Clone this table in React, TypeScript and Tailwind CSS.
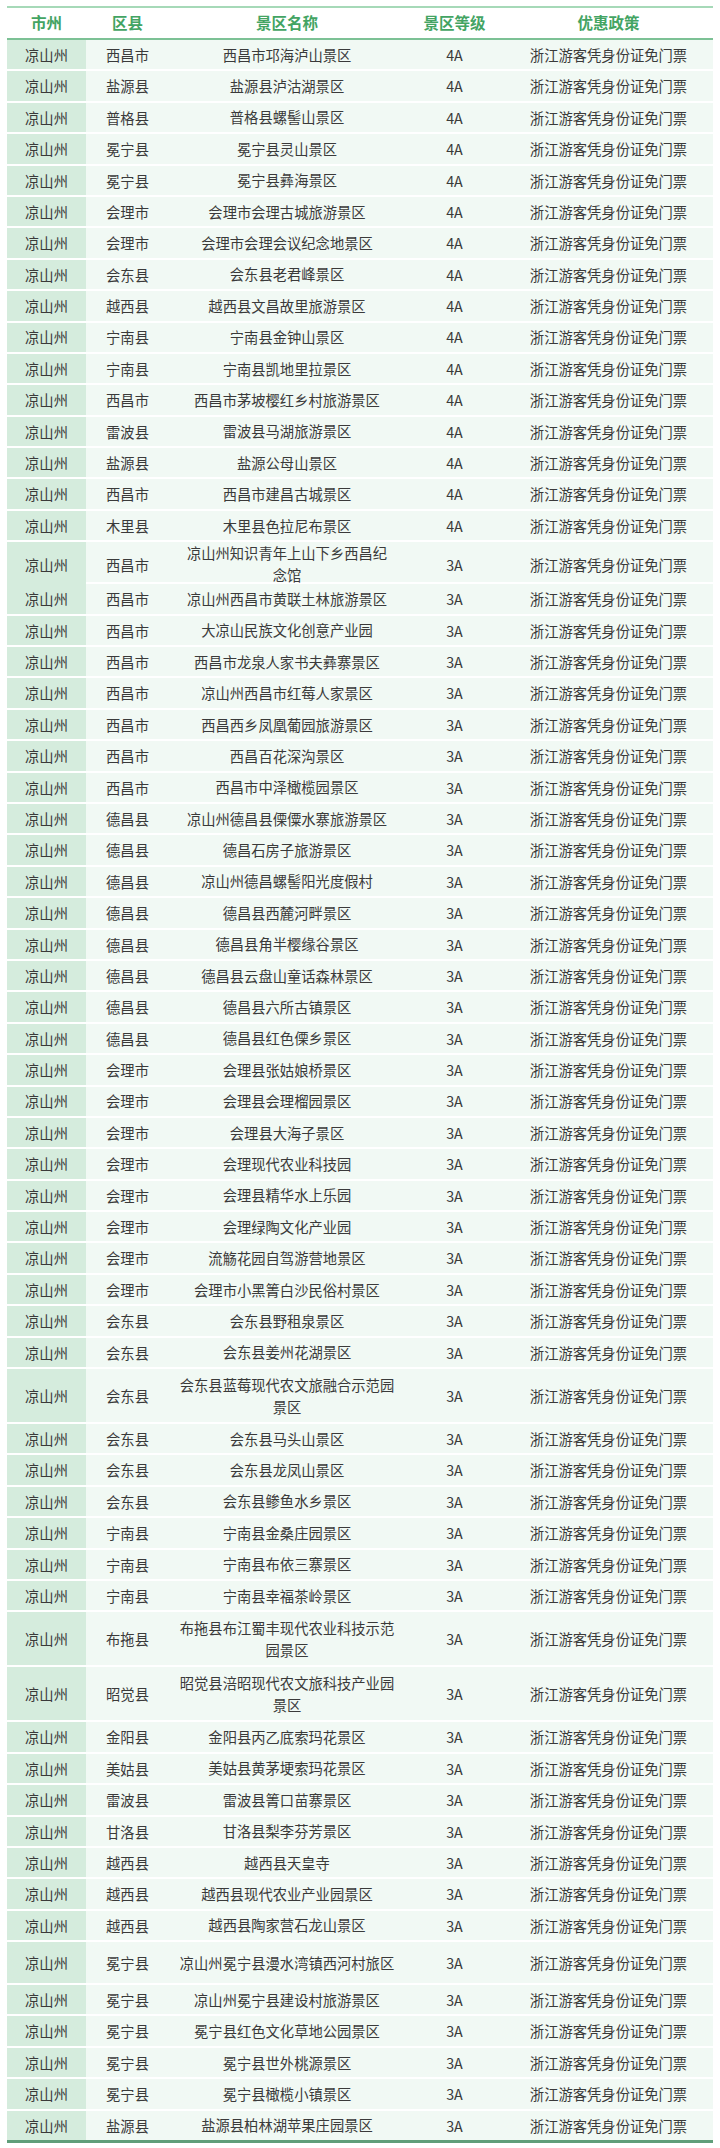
type Spot = {
  county: string;
  name: string;
  level: string;
  h?: string;
};

// names with "|" are broken onto two lines, as in the source sheet
const spots: Spot[] = [
  { county: '西昌市', name: '西昌市邛海泸山景区', level: '4A' },
  { county: '盐源县', name: '盐源县泸沽湖景区', level: '4A' },
  { county: '普格县', name: '普格县螺髻山景区', level: '4A' },
  { county: '冕宁县', name: '冕宁县灵山景区', level: '4A' },
  { county: '冕宁县', name: '冕宁县彝海景区', level: '4A' },
  { county: '会理市', name: '会理市会理古城旅游景区', level: '4A' },
  { county: '会理市', name: '会理市会理会议纪念地景区', level: '4A' },
  { county: '会东县', name: '会东县老君峰景区', level: '4A' },
  { county: '越西县', name: '越西县文昌故里旅游景区', level: '4A' },
  { county: '宁南县', name: '宁南县金钟山景区', level: '4A' },
  { county: '宁南县', name: '宁南县凯地里拉景区', level: '4A' },
  { county: '西昌市', name: '西昌市茅坡樱红乡村旅游景区', level: '4A' },
  { county: '雷波县', name: '雷波县马湖旅游景区', level: '4A' },
  { county: '盐源县', name: '盐源公母山景区', level: '4A' },
  { county: '西昌市', name: '西昌市建昌古城景区', level: '4A' },
  { county: '木里县', name: '木里县色拉尼布景区', level: '4A' },
  { county: '西昌市', name: '凉山州知识青年上山下乡西昌纪|念馆', level: '3A', h: 'h-[40px]' },
  { county: '西昌市', name: '凉山州西昌市黄联土林旅游景区', level: '3A' },
  { county: '西昌市', name: '大凉山民族文化创意产业园', level: '3A' },
  { county: '西昌市', name: '西昌市龙泉人家书夫彝寨景区', level: '3A' },
  { county: '西昌市', name: '凉山州西昌市红莓人家景区', level: '3A' },
  { county: '西昌市', name: '西昌西乡凤凰葡园旅游景区', level: '3A' },
  { county: '西昌市', name: '西昌百花深沟景区', level: '3A' },
  { county: '西昌市', name: '西昌市中泽橄榄园景区', level: '3A' },
  { county: '德昌县', name: '凉山州德昌县傈僳水寨旅游景区', level: '3A' },
  { county: '德昌县', name: '德昌石房子旅游景区', level: '3A' },
  { county: '德昌县', name: '凉山州德昌螺髻阳光度假村', level: '3A' },
  { county: '德昌县', name: '德昌县西麓河畔景区', level: '3A' },
  { county: '德昌县', name: '德昌县角半樱缘谷景区', level: '3A' },
  { county: '德昌县', name: '德昌县云盘山童话森林景区', level: '3A' },
  { county: '德昌县', name: '德昌县六所古镇景区', level: '3A' },
  { county: '德昌县', name: '德昌县红色傈乡景区', level: '3A' },
  { county: '会理市', name: '会理县张姑娘桥景区', level: '3A' },
  { county: '会理市', name: '会理县会理榴园景区', level: '3A' },
  { county: '会理市', name: '会理县大海子景区', level: '3A' },
  { county: '会理市', name: '会理现代农业科技园', level: '3A' },
  { county: '会理市', name: '会理县精华水上乐园', level: '3A' },
  { county: '会理市', name: '会理绿陶文化产业园', level: '3A' },
  { county: '会理市', name: '流觞花园自驾游营地景区', level: '3A' },
  { county: '会理市', name: '会理市小黑箐白沙民俗村景区', level: '3A' },
  { county: '会东县', name: '会东县野租泉景区', level: '3A' },
  { county: '会东县', name: '会东县姜州花湖景区', level: '3A' },
  { county: '会东县', name: '会东县蓝莓现代农文旅融合示范园|景区', level: '3A', h: 'h-[53px]' },
  { county: '会东县', name: '会东县马头山景区', level: '3A' },
  { county: '会东县', name: '会东县龙凤山景区', level: '3A' },
  { county: '会东县', name: '会东县鲹鱼水乡景区', level: '3A' },
  { county: '宁南县', name: '宁南县金桑庄园景区', level: '3A' },
  { county: '宁南县', name: '宁南县布依三寨景区', level: '3A' },
  { county: '宁南县', name: '宁南县幸福茶岭景区', level: '3A' },
  { county: '布拖县', name: '布拖县布江蜀丰现代农业科技示范|园景区', level: '3A', h: 'h-[53px]' },
  { county: '昭觉县', name: '昭觉县涪昭现代农文旅科技产业园|景区', level: '3A', h: 'h-[53px]' },
  { county: '金阳县', name: '金阳县丙乙底索玛花景区', level: '3A' },
  { county: '美姑县', name: '美姑县黄茅埂索玛花景区', level: '3A' },
  { county: '雷波县', name: '雷波县箐口苗寨景区', level: '3A' },
  { county: '甘洛县', name: '甘洛县梨李芬芳景区', level: '3A' },
  { county: '越西县', name: '越西县天皇寺', level: '3A' },
  { county: '越西县', name: '越西县现代农业产业园景区', level: '3A' },
  { county: '越西县', name: '越西县陶家营石龙山景区', level: '3A' },
  { county: '冕宁县', name: '凉山州冕宁县漫水湾镇西河村旅区', level: '3A', h: 'h-[41px]' },
  { county: '冕宁县', name: '凉山州冕宁县建设村旅游景区', level: '3A' },
  { county: '冕宁县', name: '冕宁县红色文化草地公园景区', level: '3A' },
  { county: '冕宁县', name: '冕宁县世外桃源景区', level: '3A' },
  { county: '冕宁县', name: '冕宁县橄榄小镇景区', level: '3A' },
  { county: '盐源县', name: '盐源县柏林湖苹果庄园景区', level: '3A' },
];

const headers = ['市州', '区县', '景区名称', '景区等级', '优惠政策'];

export default function App() {
  return (
    <div className="min-h-screen bg-white px-[7px] pt-[6px] font-['Noto_Sans_CJK_SC','Noto_Sans',sans-serif]">
      {/* Header */}
      <div className="grid h-[34px] grid-cols-[79px_83px_236px_99px_209px] items-center border-t-2 border-b-2 border-t-[#a6d9b8] border-b-[#7cc195]">
        {headers.map((h) => (
          <div key={h} className="text-center text-[15.5px] font-bold leading-none text-[#43a463]">
            {h}
          </div>
        ))}
      </div>

      {/* Rows */}
      <div className="flex flex-col gap-[2px] border-b-[3px] border-[#5f9f7a] bg-white">
        {spots.map((s, i) => (
          <div
            key={i}
            className={`grid grid-cols-[79px_83px_236px_99px_209px] bg-[#f1f9f4] text-[14.3px] text-[#3a3a3a] ${s.h ?? 'h-[29.4px]'}`}
          >
            <div className="flex items-center justify-center bg-[#d5ecdd]">凉山州</div>
            <div className="flex items-center justify-center">{s.county}</div>
            <div className="flex flex-col items-center justify-center leading-[22px]">
              {s.name.split('|').map((line) => (
                <span key={line} className="whitespace-nowrap">
                  {line}
                </span>
              ))}
            </div>
            <div className="flex items-center justify-center">{s.level}</div>
            <div className="flex items-center justify-center">浙江游客凭身份证免门票</div>
          </div>
        ))}
      </div>
    </div>
  );
}
